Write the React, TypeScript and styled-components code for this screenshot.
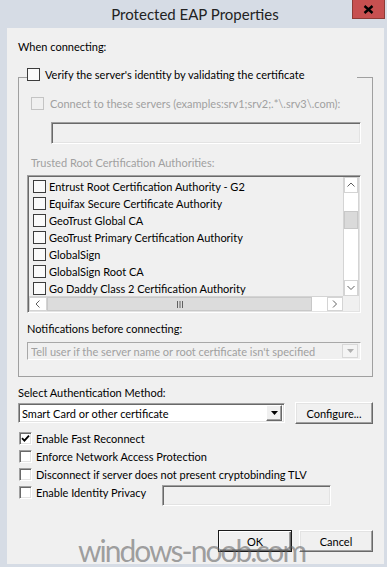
import React from 'react';
import styled, { createGlobalStyle, css } from 'styled-components';

const UI = `Lato, "Liberation Sans", sans-serif`;

const Global = createGlobalStyle`
  html, body { margin: 0; padding: 0; background: #d6dce5; }
  body { font-family: ${UI}; }
  * { box-sizing: border-box; }
`;

const Window = styled.div`
  width: 387px;
  height: 567px;
  display: flex;
  flex-direction: column;
  background: #d6dce5;
  overflow: hidden;
`;

const TitleBar = styled.div`
  height: 28px;
  flex-shrink: 0;
  display: flex;
  align-items: flex-start;
  padding: 0 2px 0 38px;
`;

const Title = styled.div`
  flex: 1;
  text-align: center;
  font-size: 15px;
  line-height: 28px;
  color: #222;
`;

const CloseButton = styled.div`
  width: 33px;
  height: 19px;
  background: #c75050;
  border: 1px solid #8e3b35;
  border-top: none;
  display: flex;
  align-items: center;
  justify-content: center;
`;

const Client = styled.div`
  position: relative;
  flex: 1;
  margin: 0 3px 3px 7px;
  background: #f0f0f0;
  padding: 12px 11px 0;
  display: flex;
  flex-direction: column;
  font-size: 11px;
  color: #000;
  overflow: hidden;
`;

const Label = styled.div<{ $disabled?: boolean; $indent?: number; $mt?: number }>`
  height: 14px;
  line-height: 14px;
  white-space: nowrap;
  color: ${(p) => (p.$disabled ? '#a0a0a0' : '#000')};
  padding-left: ${(p) => p.$indent ?? 0}px;
  margin-top: ${(p) => p.$mt ?? 0}px;
`;

const GroupBox = styled.fieldset`
  margin: 11px 0 0;
  padding: 0 11px 16px 8px;
  border: 1px solid #a0a0a0;
  min-width: 0;
`;

const Legend = styled.legend`
  width: 330px;
  padding: 0 0 6px;
  margin: 0;
  height: 24px;
`;

type BoxKind = 'flat' | 'disabled' | 'sunken';

const Box = styled.span<{ $kind: BoxKind }>`
  flex-shrink: 0;
  width: 13px;
  height: 13px;
  display: inline-flex;
  align-items: center;
  justify-content: center;
  ${(p) =>
    p.$kind === 'flat'
      ? css`
          border: 1px solid #3c3c3c;
          background: #fafafa;
        `
      : p.$kind === 'disabled'
      ? css`
          border: 1px solid #c4c4c4;
          background: #f0f0f0;
        `
      : css`
          border: 1px solid;
          border-color: #a0a0a0 #fff #fff #a0a0a0;
          box-shadow: inset 1px 1px #696969, inset -1px -1px #e3e3e3;
          background: #fff;
        `}
`;

const CheckRow = styled.div<{ $h?: number; $gap?: number; $indent?: number; $mt?: number; $disabled?: boolean; $w?: number }>`
  display: flex;
  align-items: center;
  height: ${(p) => p.$h ?? 18}px;
  width: ${(p) => (p.$w ? `${p.$w}px` : 'auto')};
  flex-shrink: 0;
  gap: ${(p) => p.$gap ?? 4}px;
  margin-left: ${(p) => p.$indent ?? 0}px;
  margin-top: ${(p) => p.$mt ?? 0}px;
  white-space: nowrap;
  color: ${(p) => (p.$disabled ? '#a0a0a0' : '#000')};
`;

const sunken = css`
  border: 1px solid;
  border-color: #a0a0a0 #fff #fff #a0a0a0;
  box-shadow: inset 1px 1px #696969, inset -1px -1px #e3e3e3;
`;

const TextInput = styled.div<{ $w: number; $h: number; $ml?: number; $mt?: number }>`
  ${sunken};
  width: ${(p) => p.$w}px;
  height: ${(p) => p.$h}px;
  margin-left: ${(p) => p.$ml ?? 0}px;
  margin-top: ${(p) => p.$mt ?? 0}px;
  background: #f0f0f0;
  flex-shrink: 0;
`;

const ListBox = styled.div`
  ${sunken};
  margin-top: 5px;
  height: 138px;
  padding: 1px;
  background: #f0f0f0;
  display: grid;
  grid-template-columns: 1fr 16px;
  grid-template-rows: 1fr 15px;
`;

const Items = styled.div`
  overflow: hidden;
  padding: 1px 0 0 4px;
`;

const Item = styled.div`
  height: 17px;
  display: flex;
  align-items: center;
  gap: 3px;
  white-space: nowrap;
`;

const VScroll = styled.div`
  display: flex;
  flex-direction: column;
  background: #fff;
  border-left: 1px solid #d4d4d4;
  border-right: 1px solid #d4d4d4;
`;

const HScroll = styled.div`
  display: flex;
  background: #fff;
  border-top: 1px solid #d4d4d4;
`;

const ArrowBtn = styled.div<{ $w?: number; $h?: number }>`
  flex-shrink: 0;
  width: ${(p) => (p.$w ? `${p.$w}px` : 'auto')};
  height: ${(p) => (p.$h ? `${p.$h}px` : 'auto')};
  background: #fff;
  border: 1px solid #d4d4d4;
  display: flex;
  align-items: center;
  justify-content: center;
`;

const VTrack = styled.div`
  flex: 1;
  display: flex;
  flex-direction: column;
  padding-top: 18px;
`;

const VThumb = styled.div`
  height: 18px;
  background: #dadada;
  border: 1px solid #c8c8c8;
`;

const HThumb = styled.div`
  width: 265px;
  background: #dcdcdc;
  border: 1px solid #c8c8c8;
  display: flex;
  align-items: center;
  justify-content: center;
`;

const HTrack = styled.div`
  flex: 1;
  background: #fff;
`;

const Corner = styled.div`
  background: #f0f0f0;
`;

const DropDown = styled.div<{ $disabled?: boolean; $w?: number; $h: number; $mt?: number }>`
  ${(p) =>
    p.$disabled
      ? css`
          border: 1px solid;
          border-color: #a8a8a8 #fff #fff #a8a8a8;
          background: #f0f0f0;
          color: #a0a0a0;
        `
      : css`
          ${sunken};
          background: #fff;
          color: #000;
        `}
  width: ${(p) => (p.$w ? `${p.$w}px` : 'auto')};
  height: ${(p) => p.$h}px;
  margin-top: ${(p) => p.$mt ?? 0}px;
  display: flex;
  align-items: center;
  padding: 0 2px 0 3px;
  white-space: nowrap;
  flex-shrink: 0;
`;

const DropText = styled.span`
  flex: 1;
  overflow: hidden;
`;

const DropButton = styled.span<{ $disabled?: boolean }>`
  width: 16px;
  height: ${(p) => (p.$disabled ? 14 : 16)}px;
  display: flex;
  align-items: center;
  justify-content: center;
  ${(p) =>
    p.$disabled
      ? css`
          border: 1px solid #d8d8d8;
          background: #f4f4f4;
        `
      : css`
          border: 1px solid;
          border-color: #fff #696969 #696969 #fff;
          box-shadow: inset -1px -1px #a0a0a0;
          background: #f0f0f0;
        `}
`;

const Row = styled.div<{ $mt?: number; $align?: string; $justify?: string; $gap?: number }>`
  display: flex;
  align-items: ${(p) => p.$align ?? 'center'};
  justify-content: ${(p) => p.$justify ?? 'flex-start'};
  gap: ${(p) => p.$gap ?? 0}px;
  margin-top: ${(p) => p.$mt ?? 0}px;
`;

const Button = styled.div<{ $w: number; $default?: boolean }>`
  width: ${(p) => p.$w}px;
  height: 22px;
  display: flex;
  align-items: center;
  justify-content: center;
  background: #f0f0f0;
  font-size: 11px;
  ${(p) =>
    p.$default
      ? css`
          border: 1px solid #1a1a1a;
          box-shadow: inset 1px 1px #fff, inset -1px -1px #696969, inset -2px -2px #a0a0a0;
        `
      : css`
          border: 1px solid;
          border-color: #fff #696969 #696969 #fff;
          box-shadow: inset -1px -1px #a0a0a0, inset 1px 1px #e3e3e3;
        `}
`;

const Watermark = styled.div`
  position: absolute;
  left: 71px;
  bottom: -6px;
  font-family: Lato, "Open Sans", sans-serif;
  font-size: 30px;
  line-height: 40px;
  letter-spacing: -2px;
  color: rgba(95, 95, 95, 0.58);
  white-space: nowrap;
  pointer-events: none;
`;

const Chevron = ({ dir }: { dir: 'up' | 'down' | 'left' | 'right' }) => {
  const d =
    dir === 'up'
      ? 'M0.5 4.5 L4 1 L7.5 4.5'
      : dir === 'down'
      ? 'M0.5 1 L4 4.5 L7.5 1'
      : dir === 'left'
      ? 'M4.5 0.5 L1 4 L4.5 7.5'
      : 'M1 0.5 L4.5 4 L1 7.5';
  const vert = dir === 'up' || dir === 'down';
  return (
    <svg width={vert ? 8 : 6} height={vert ? 6 : 8} viewBox={vert ? '0 0 8 6' : '0 0 6 8'}>
      <path d={d} fill="none" stroke="#606060" strokeWidth="1" />
    </svg>
  );
};

const Tri = ({ color, w = 7 }: { color: string; w?: number }) => (
  <svg width={w} height={Math.ceil(w / 2)} viewBox={`0 0 ${w} ${Math.ceil(w / 2)}`}>
    <path d={`M0 0 L${w} 0 L${w / 2} ${Math.ceil(w / 2)} Z`} fill={color} />
  </svg>
);

const Check = () => (
  <svg width="9" height="9" viewBox="0 0 9 9">
    <path d="M1 4.2 L3.4 6.6 L8 1.6" fill="none" stroke="#000" strokeWidth="1.8" />
  </svg>
);

const Grip = () => (
  <svg width="8" height="7" viewBox="0 0 8 7">
    <path d="M1.5 0 V7 M4 0 V7 M6.5 0 V7" stroke="#606060" strokeWidth="1" />
  </svg>
);

const certs = [
  'Entrust Root Certification Authority - G2',
  'Equifax Secure Certificate Authority',
  'GeoTrust Global CA',
  'GeoTrust Primary Certification Authority',
  'GlobalSign',
  'GlobalSign Root CA',
  'Go Daddy Class 2 Certification Authority',
];

export default function App() {
  return (
    <>
      <Global />
      <Window>
        <TitleBar>
          <Title>Protected EAP Properties</Title>
          <CloseButton>
            <svg width="11" height="9" viewBox="0 0 11 9">
              <path d="M1.5 1 L9.5 8 M9.5 1 L1.5 8" stroke="#000" strokeWidth="2.4" />
            </svg>
          </CloseButton>
        </TitleBar>
        <Client>
          <Label>When connecting:</Label>
          <GroupBox>
            <Legend>
              <CheckRow $gap={5}>
                <Box $kind="flat" />
                Verify the server's identity by validating the certificate
              </CheckRow>
            </Legend>
            <CheckRow $h={15} $gap={6} $indent={4} $mt={7} $disabled>
              <Box $kind="disabled" />
              Connect to these servers (examples:srv1;srv2;.*\.srv3\.com):
            </CheckRow>
            <TextInput $w={310} $h={22} $ml={24} $mt={11} />
            <Label $disabled $indent={4} $mt={12}>
              Trusted Root Certification Authorities:
            </Label>
            <ListBox>
              <Items>
                {certs.map((c) => (
                  <Item key={c}>
                    <Box $kind="flat" />
                    {c}
                  </Item>
                ))}
              </Items>
              <VScroll>
                <ArrowBtn $h={16}>
                  <Chevron dir="up" />
                </ArrowBtn>
                <VTrack>
                  <VThumb />
                </VTrack>
                <ArrowBtn $h={16}>
                  <Chevron dir="down" />
                </ArrowBtn>
              </VScroll>
              <HScroll>
                <ArrowBtn $w={18}>
                  <Chevron dir="left" />
                </ArrowBtn>
                <HThumb>
                  <Grip />
                </HThumb>
                <HTrack />
                <ArrowBtn $w={16}>
                  <Chevron dir="right" />
                </ArrowBtn>
              </HScroll>
              <Corner />
            </ListBox>
            <Label $mt={9}>Notifications before connecting:</Label>
            <DropDown $disabled $h={18} $mt={6}>
              <DropText>Tell user if the server name or root certificate isn't specified</DropText>
              <DropButton $disabled>
                <Tri color="#b0b0b0" w={7} />
              </DropButton>
            </DropDown>
          </GroupBox>
          <Label $mt={9}>Select Authentication Method:</Label>
          <Row $mt={2} $justify="space-between">
            <DropDown $w={267} $h={20}>
              <DropText>Smart Card or other certificate</DropText>
              <DropButton>
                <Tri color="#000" w={7} />
              </DropButton>
            </DropDown>
            <Button $w={78}>Configure...</Button>
          </Row>
          <CheckRow $indent={1} $mt={5}>
            <Box $kind="sunken">
              <Check />
            </Box>
            Enable Fast Reconnect
          </CheckRow>
          <CheckRow $indent={1}>
            <Box $kind="sunken" />
            Enforce Network Access Protection
          </CheckRow>
          <CheckRow $indent={1}>
            <Box $kind="sunken" />
            Disconnect if server does not present cryptobinding TLV
          </CheckRow>
          <Row $align="flex-start">
            <CheckRow $indent={1} $w={143}>
              <Box $kind="sunken" />
              Enable Identity Privacy
            </CheckRow>
            <TextInput $w={169} $h={21} $mt={2} />
          </Row>
          <Row $mt={24} $justify="flex-end" $gap={7}>
            <Button $w={74} $default>
              OK
            </Button>
            <Button $w={74}>Cancel</Button>
          </Row>
          <Watermark>windows-noob.com</Watermark>
        </Client>
      </Window>
    </>
  );
}
